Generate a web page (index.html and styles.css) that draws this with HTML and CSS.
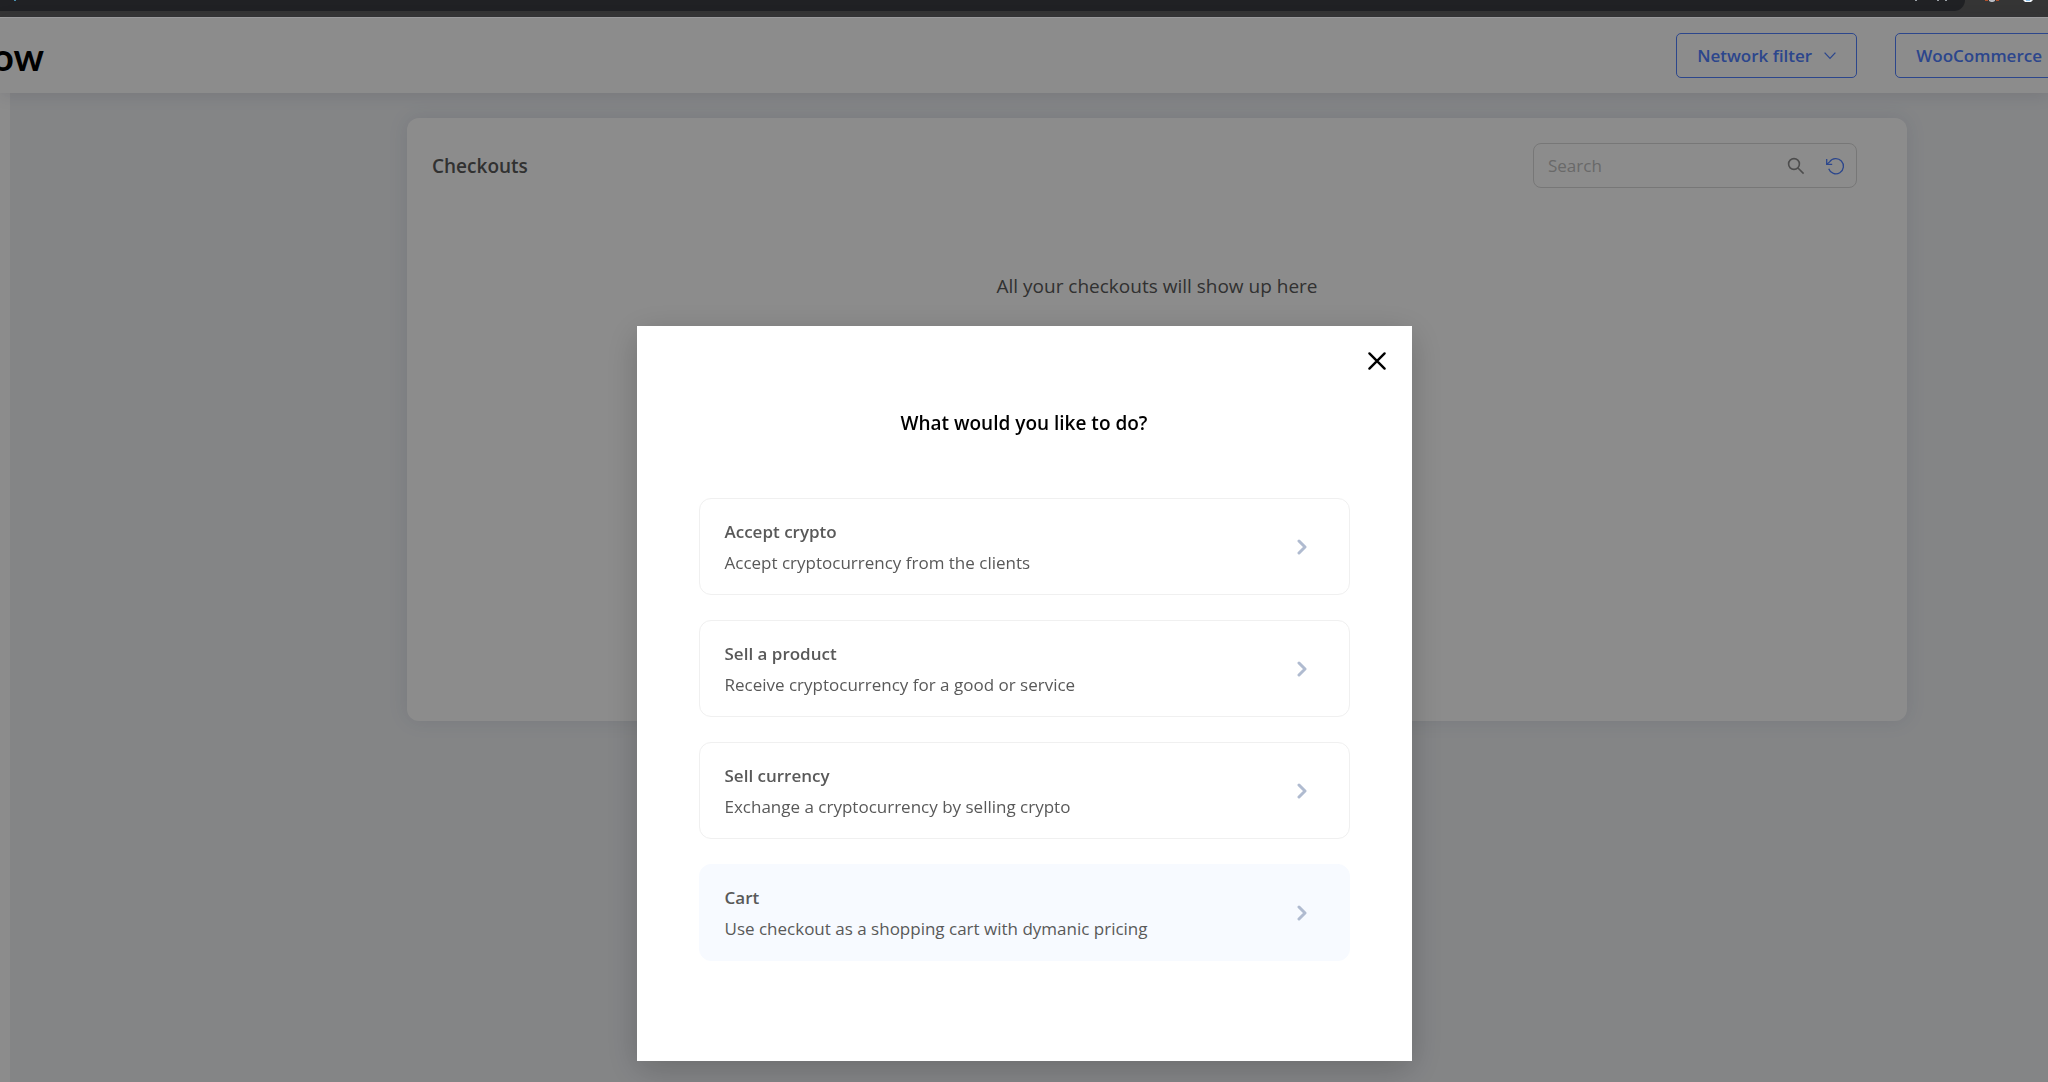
FILE: index.html
```html
<!DOCTYPE html>
<html lang="en">
<head>
    <meta charset="UTF-8">
    <meta name="viewport" content="width=device-width, initial-scale=1.0">
    <title>Checkouts</title>
    <link rel="stylesheet" href="styles.css">
</head>
<body>
    <!-- Browser bar -->
    <div class="browser-bar">
        <div class="address-bar">
            <span class="speck site"></span>
            <span class="speck"></span>
            <span class="speck pair"></span>
            <span class="speck"></span>
        </div>
        <div class="extensions">
            <svg width="14" height="2" viewBox="0 0 14 2"><path d="M0 0h3v1H0z M11 0h3v1h-3z" fill="#b0502c"/><path d="M4 0h6v1L8 2H6L4 1z" fill="#b9bcc4"/></svg>
            <svg width="10" height="2" viewBox="0 0 10 2"><path d="M0 0h10L8 2H2z" fill="#f2f6fa"/><path d="M3 0h4v1H3z" fill="#8cc4f0"/></svg>
        </div>
    </div>

    <div class="app">
        <header class="header">
            <a class="logo" href="#">ow</a>
            <div class="header-actions">
                <button class="outline-btn" type="button">
                    Network filter
                    <svg width="12" height="12" viewBox="0 0 12 12" fill="none" stroke="currentColor" stroke-width="1.3"><path d="M0.6 2.6 L6 8.4 L11.4 2.6"/></svg>
                </button>
                <button class="outline-btn" type="button">WooCommerce</button>
            </div>
        </header>

        <div class="layout">
            <aside class="sidebar"></aside>
            <main class="content">
                <section class="card">
                    <div class="card-header">
                        <h1>Checkouts</h1>
                        <div class="search-box">
                            <input type="text" placeholder="Search" aria-label="Search">
                            <button type="button" aria-label="Find">
                                <svg width="18" height="18" viewBox="0 0 18 18" fill="none" stroke="#8c8c8c" stroke-width="1.6"><circle cx="7" cy="7" r="5.4"/><path d="M11 11 L16.6 16.6"/></svg>
                            </button>
                            <button class="refresh" type="button" aria-label="Refresh">
                                <svg width="20" height="20" viewBox="0 0 20 20" fill="none" stroke="currentColor" stroke-width="1.3"><path d="M3.7 12.8 A7.6 7.6 0 1 0 4.6 5.9 L1.8 8.3"/><path d="M1.7 3 V8.3 H7.2"/></svg>
                            </button>
                        </div>
                    </div>
                    <p class="empty">All your checkouts will show up here</p>
                </section>
            </main>
        </div>
    </div>

    <!-- Checkout type popup -->
    <div class="overlay">
        <div class="modal" role="dialog" aria-labelledby="modal-title">
            <button class="close" type="button" aria-label="Close">
                <svg width="20" height="20" viewBox="0 0 20 20" fill="none" stroke="#000" stroke-width="2.4" stroke-linecap="round"><path d="M2.4 2.4 L17.6 17.6 M17.6 2.4 L2.4 17.6"/></svg>
            </button>
            <h2 id="modal-title">What would you like to do?</h2>
            <div class="options">
                <button class="option" type="button">
                    <span><strong>Accept crypto</strong>Accept cryptocurrency from the clients</span>
                    <svg width="10" height="16" viewBox="0 0 10 16"><path d="M2 2 L8 8 L2 14"/></svg>
                </button>
                <button class="option" type="button">
                    <span><strong>Sell a product</strong>Receive cryptocurrency for a good or service</span>
                    <svg width="10" height="16" viewBox="0 0 10 16"><path d="M2 2 L8 8 L2 14"/></svg>
                </button>
                <button class="option" type="button">
                    <span><strong>Sell currency</strong>Exchange a cryptocurrency by selling crypto</span>
                    <svg width="10" height="16" viewBox="0 0 10 16"><path d="M2 2 L8 8 L2 14"/></svg>
                </button>
                <button class="option active" type="button">
                    <span><strong>Cart</strong>Use checkout as a shopping cart with dymanic pricing</span>
                    <svg width="10" height="16" viewBox="0 0 10 16"><path d="M2 2 L8 8 L2 14"/></svg>
                </button>
            </div>
        </div>
    </div>
</body>
</html>
```

FILE: styles.css
```css
* {
    box-sizing: border-box;
}
body {
    margin: 0;
    height: 100vh;
    display: flex;
    flex-direction: column;
    overflow: hidden;
    font-family: 'Segoe UI', 'Open Sans', sans-serif;
    font-size: 17px;
    color: #595959;
    background-color: #f0f2f5;
}
button, input {
    font: inherit;
    color: inherit;
    border: none;
    background: none;
    padding: 0;
}
button {
    cursor: pointer;
}
svg {
    display: block;
    flex-shrink: 0;
}
h1, h2, p {
    margin: 0;
}
.browser-bar {
    height: 18px;
    flex-shrink: 0;
    display: flex;
    background-color: #353535;
    border-bottom: 1px solid #a0a0a0;
    padding-right: 15px;
    gap: 20px;
}
.address-bar {
    flex: 1;
    height: 11px;
    background-color: #202124;
    border-bottom-right-radius: 16px;
    display: flex;
    gap: 6px;
    padding: 0 18px 0 14px;
}
.speck {
    width: 2px;
    height: 1px;
    background-color: #9aa0a6;
}
.speck.site {
    margin-right: auto;
    background-color: #4a90b0;
}
.speck.pair {
    margin-left: 14px;
}
.extensions {
    display: flex;
    gap: 24px;
}
.app {
    flex: 1;
    display: flex;
    flex-direction: column;
}
.header {
    height: 75px;
    display: flex;
    align-items: center;
    justify-content: space-between;
    background-color: #fff;
    box-shadow: 0 2px 16px rgba(40, 40, 80, 0.12);
    z-index: 1;
}
.logo {
    margin-left: -8px;
    font-family: Lato, sans-serif;
    font-size: 38px;
    font-weight: 700;
    line-height: 40px;
    color: #000;
    text-decoration: none;
}
.header-actions {
    display: flex;
    gap: 38px;
    margin-right: -15px;
}
.outline-btn {
    display: flex;
    align-items: center;
    gap: 16px;
    height: 45px;
    padding: 0 20px;
    border: 1px solid #5080ff;
    border-radius: 5px;
    color: #5080ff;
    font-weight: 600;
}
.outline-btn svg {
    margin-left: -4px;
}
.layout {
    flex: 1;
    display: flex;
}
.sidebar {
    width: 10px;
    background-color: #fff;
}
.content {
    flex: 1;
    padding: 25px 141px 0 397px;
}
.card {
    min-height: 603px;
    padding: 25px 50px 0 25px;
    background-color: #fff;
    border-radius: 12px;
    box-shadow: 0 0 20px rgba(40, 60, 100, 0.1);
}
.card-header {
    display: flex;
    justify-content: space-between;
    align-items: center;
}
.card-header h1 {
    font-size: 19px;
    font-weight: 600;
}
.search-box {
    display: flex;
    align-items: center;
    width: 324px;
    height: 45px;
    padding: 0 11px 0 14px;
    border: 1px solid #d9d9d9;
    border-radius: 8px;
}
.search-box input {
    flex: 1;
    min-width: 0;
}
.search-box input::placeholder {
    color: #bfbfbf;
}
.refresh {
    margin-left: 20px;
    color: #5080ff;
}
.empty {
    padding-left: 25px;
    margin-top: 84px;
    font-size: 19px;
    line-height: 28px;
    text-align: center;
}
.overlay {
    position: fixed;
    top: 18px;
    left: 0;
    right: 0;
    bottom: 0;
    z-index: 10;
    display: flex;
    justify-content: center;
    align-items: flex-start;
    padding-top: 308px;
    background-color: rgba(0, 0, 0, 0.45);
}
.modal {
    position: relative;
    width: 775px;
    padding: 82px 62px 100px;
    background-color: #fff;
    box-shadow: 0 8px 32px rgba(0, 0, 0, 0.2);
}
.close {
    position: absolute;
    top: 25px;
    right: 25px;
}
.modal h2 {
    font-size: 19px;
    line-height: 30px;
    font-weight: 600;
    color: #000;
    text-align: center;
}
.options {
    display: flex;
    flex-direction: column;
    gap: 25px;
    margin-top: 60px;
}
.option {
    display: flex;
    align-items: center;
    justify-content: space-between;
    padding: 17px 42px 16px 25px;
    border: 1px solid #f0f0f0;
    border-radius: 12px;
    line-height: 31px;
    text-align: left;
}
.option strong {
    display: block;
    font-weight: 600;
}
.option svg {
    fill: none;
    stroke: #b0bbd0;
    stroke-width: 3;
    stroke-linecap: round;
    stroke-linejoin: round;
}
.option.active {
    border-color: #f7faff;
    background-color: #f7faff;
}
```
